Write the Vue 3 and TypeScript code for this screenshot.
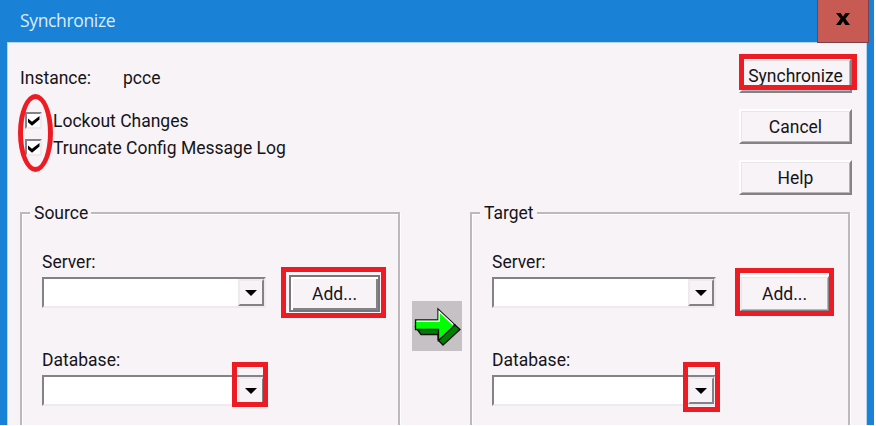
<script setup lang="ts">
interface Panel {
  id: string
  title: string
}
const options: string[] = ['Lockout Changes', 'Truncate Config Message Log']
const actions: string[] = ['Synchronize', 'Cancel', 'Help']
const source: Panel = { id: 'source', title: 'Source' }
const target: Panel = { id: 'target', title: 'Target' }
const panels: Panel[] = [source, target]
</script>

<template>
  <div class="window">
    <header class="titlebar">
      <span class="title">Synchronize</span>
      <button class="close" aria-label="Close">
        <svg width="14" height="12" viewBox="0 0 14 12"><path d="M0 0h4.6L7 3.5 9.4 0H14L9.4 5.8 14 12H9.4L7 8.3 4.6 12H0l4.6-6.2z" /></svg>
      </button>
    </header>
    <main class="body">
      <section class="top">
        <div class="settings">
          <div class="instance"><span class="t-instance">Instance:</span><span class="t-pcce">pcce</span></div>
          <label v-for="(option, i) in options" :key="option" class="option">
            <span class="check">
              <svg width="12" height="10" viewBox="0 0 12 10"><path d="M0 2.5l4 3.2L11.5 0v3.6L4 9.7 0 6.2z" /></svg>
            </span>
            <span :class="i === 0 ? 't-lock' : 't-trunc'">{{ option }}</span>
          </label>
        </div>
        <div class="actions">
          <button v-for="action in actions" :key="action" class="btn action" :class="'a-' + action.toLowerCase()">
            <span>{{ action }}</span>
          </button>
        </div>
      </section>
      <section class="groups">
        <template v-for="panel in panels" :key="panel.id">
          <div class="group" :class="panel.id">
            <span class="legend">{{ panel.title }}</span>
            <div class="fields">
              <div class="field">
                <span class="label t-server">Server:</span>
                <div class="combo"><span class="drop"><i class="tri"></i></span></div>
              </div>
              <div class="field">
                <span class="label t-database">Database:</span>
                <div class="combo"><span class="drop"><i class="tri"></i></span></div>
              </div>
            </div>
            <button class="btn add"><span>Add...</span></button>
          </div>
          <div v-if="panel.id === 'source'" class="arrow">
            <svg width="50" height="50" viewBox="0 0 50 50">
              <path d="M3.5 26L9 33.5h17V39l5 5L48 28.5 43 24z" fill="#008000" stroke="#111" stroke-width="1.3" />
              <path d="M3.5 19H26V8l17 16-16.500 15.500V28.500H3.500z" fill="#0f0" stroke="#111" stroke-width="1.3" />
              <path d="M4.500 20.200H27.200V10.500L41 23.500" fill="none" stroke="#fff" stroke-width="1.400" />
            </svg>
          </div>
        </template>
      </section>
    </main>
    <i class="mark m-checks"></i>
    <i class="mark m-sync"></i>
    <i class="mark m-add1"></i>
    <i class="mark m-add2"></i>
    <i class="mark m-drop1"></i>
    <i class="mark m-drop2"></i>
  </div>
</template>

<style>
body { background: #fff; overflow: hidden; }
</style>

<style scoped>
* { box-sizing: border-box; }
.window {
  position: relative; width: 874px; height: 425px; overflow: hidden;
  background: #1a82d6; color: #161418;
  font: 17.500px/20px Roboto, "Liberation Sans", sans-serif;
}
span { white-space: nowrap; }
.titlebar { height: 42px; display: flex; justify-content: space-between; padding: 0 5px 0 20px; }
.title { color: #dcecf9; font: 17.500px/41px "Open Sans", "Noto Sans", sans-serif; letter-spacing: -.35px; }
.close { width: 52px; height: 43px; padding: 0 0 4px; display: flex; align-items: center; justify-content: center; background: #c75b54; border: 1px solid #7b3f4a; border-top: 0; }
.body { margin: 0 7px 0 7px; height: 383px; background: #f7f3f7; border: 1px solid #b7d4ee; border-bottom: 0; }
.top { height: 169px; display: flex; justify-content: space-between; padding: 15px 14px 0 12px; }
.settings { padding-top: 10px; }
.instance { display: flex; height: 20px; margin-bottom: 23px; }
.t-instance { width: 103px; }
.option { display: flex; height: 27px; padding-left: 5px; }
.check { width: 17px; height: 17px; margin: 1px 11px 0 0; display: flex; align-items: center; justify-content: center; background: #fff; border: 2px solid; border-color: #858287 #eeeaee #eeeaee #858287; }
.actions { display: flex; flex-direction: column; gap: 16px; }
.btn { padding: 0; color: inherit; font: inherit; background: #f7f3f7; border: 2px solid; border-color: #fff #858287 #858287 #fff; box-shadow: inset 1px 1px #e9e5e9, inset -1px -1px #b8b4b8; }
.action { width: 113px; height: 35px; }
.groups { display: flex; height: 213px; padding-left: 12px; }
.group { position: relative; width: 380px; height: 240px; border: 2px solid #bcb8bc; box-shadow: inset 1px 1px #fff, 1px 1px #fff; display: flex; }
.legend { position: absolute; left: 8px; top: -11px; padding: 0 3px 0 4px; background: #f7f3f7; }
.fields { padding: 38px 0 0 20px; width: 267px; }
.field { height: 98px; }
.label { display: block; height: 25px; }
.combo { width: 224px; height: 31px; background: #fff; border: 2px solid; border-color: #858287 #eeeaee #eeeaee #858287; display: flex; justify-content: flex-end; }
.drop { width: 26px; height: 27px; background: #f7f3f7; border: 2px solid; border-color: #eeeaee #858287 #858287 #eeeaee; display: flex; align-items: center; justify-content: center; }
.tri { border: 6px solid transparent; border-top-color: #000; border-bottom: 0; }
.add { width: 91px; height: 37px; margin-top: 61px; }
.source .add { border: 2px solid #777; box-shadow: inset 2px 2px #fff, inset -2px -2px #858287; }
.arrow { width: 50px; height: 50px; margin: 89px 8px 0 12px; background: #c5c1c5; }
.arrow svg { display: block; }
.mark { position: absolute; border: 5px solid #ed1c24; }
.m-checks { left: 18px; top: 94px; width: 35px; height: 78px; border-radius: 50%; }
.m-sync { left: 739px; top: 54px; width: 118px; height: 36px; }
.m-add1 { left: 281px; top: 267px; width: 105px; height: 51px; }
.m-add2 { left: 735px; top: 268px; width: 99px; height: 48px; }
.m-drop1 { left: 232px; top: 362px; width: 36px; height: 45px; }
.m-drop2 { left: 683px; top: 362px; width: 37px; height: 50px; }
</style>
